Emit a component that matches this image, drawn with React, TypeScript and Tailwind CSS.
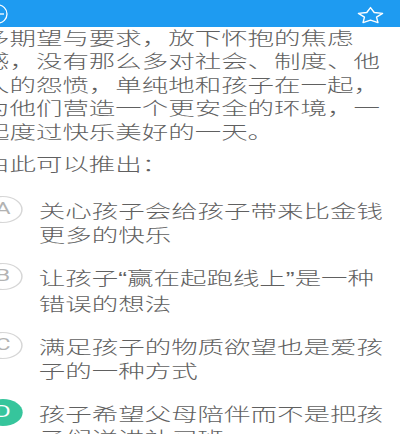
import React from "react";

const paragraph = [
  "多期望与要求，放下怀抱的焦虑",
  "感，没有那么多对社会、制度、他",
  "人的怨愤，单纯地和孩子在一起，",
  "为他们营造一个更安全的环境，一",
  "起度过快乐美好的一天。",
];

const Q = ({ c }: { c: string }) => (
  <span className="font-['Liberation_Sans',sans-serif]">{c}</span>
);

const options: { key: string; lines: React.ReactNode[]; on: boolean }[] = [
  { key: "A", lines: ["关心孩子会给孩子带来比金钱", "更多的快乐"], on: false },
  {
    key: "B",
    lines: [
      <>
        让孩子<Q c="“" />赢在起跑线上<Q c="”" />是一种
      </>,
      "错误的想法",
    ],
    on: false,
  },
  { key: "C", lines: ["满足孩子的物质欲望也是爱孩", "子的一种方式"], on: false },
  { key: "D", lines: ["孩子希望父母陪伴而不是把孩", "子们送进补习班"], on: true },
];

export default function App() {
  return (
    <div className="w-[400px] h-[434px] overflow-hidden bg-white font-['Noto_Sans_CJK_SC',sans-serif]">
      <div className="relative z-10 h-[27px] bg-[#1e9bf1] flex items-center justify-between">
        <svg className="-ml-[13px]" width="22" height="22" viewBox="0 0 22 22">
          <circle cx="11" cy="11" r="9" stroke="white" strokeWidth="1.3" fill="none" />
          <line x1="6" y1="11" x2="17" y2="11" stroke="white" strokeWidth="1.3" />
        </svg>
        <svg
          className="mr-[15px] mt-[3px]"
          width="29"
          height="19"
          viewBox="0 0 24 24"
          preserveAspectRatio="none"
        >
          <path
            d="M12 2l3.09 6.26L22 9.27l-5 4.87 1.18 6.88L12 17.77l-6.18 3.25L7 14.14 2 9.27l6.91-1.01L12 2z"
            fill="none"
            stroke="white"
            strokeWidth="1.4"
            strokeLinejoin="round"
            vectorEffect="non-scaling-stroke"
          />
        </svg>
      </div>
      <div className="-ml-[17.5px] -mt-[1.5px] w-[300px] origin-top-left scale-x-[1.47] text-[18px] font-light text-[#606060]">
        <div className="leading-[23.5px] whitespace-nowrap">
          {paragraph.map((l) => (
            <div key={l}>{l}</div>
          ))}
        </div>
        <div className="mt-[9px] leading-[23.5px] whitespace-nowrap">由此可以推出：</div>
        <div className="mt-[22px] flex flex-col gap-[19px]">
          {options.map((o) => (
            <div key={o.key} className="flex items-start gap-[11px]">
              <div
                className={
                  o.on
                    ? "-mt-[2px] w-[27px] h-[27px] shrink-0 rounded-full bg-[#36c59c] flex items-center justify-center text-white text-[16px] font-normal font-['Roboto',sans-serif]"
                    : "-mt-[2px] w-[27px] h-[27px] shrink-0 rounded-full border border-[#d6d6d6] flex items-center justify-center text-[#b3b3b3] text-[16px] font-normal font-['Roboto',sans-serif]"
                }
              >
                {o.key}
              </div>
              <div className="leading-[24px] whitespace-nowrap">
                {o.lines.map((l, i) => (
                  <div key={i}>{l}</div>
                ))}
              </div>
            </div>
          ))}
        </div>
      </div>
    </div>
  );
}
